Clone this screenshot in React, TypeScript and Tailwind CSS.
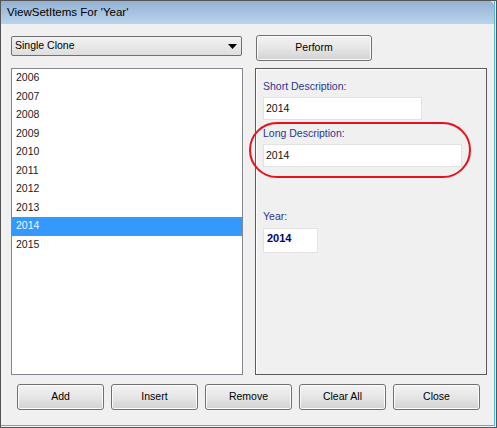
import React from "react";

const years = ["2006", "2007", "2008", "2009", "2010", "2011", "2012", "2013", "2014", "2015"];
const selected = "2014";

const font = { fontFamily: '"Liberation Sans", Arial, sans-serif' };

function WinButton({ label, className = "" }: { label: string; className?: string }) {
  return (
    <button
      className={`h-[26px] rounded-[3px] border border-[#707070] bg-gradient-to-b from-[#f3f3f3] via-[#e6e6e6] to-[#d2d2d2] text-[10.5px] text-black shadow-[inset_0_0_0_1px_#fcfcfc] ${className}`}
    >
      {label}
    </button>
  );
}

export default function App() {
  return (
    <div style={font} className="w-[497px] h-[428px] border border-[#555555] bg-[#e8e8e8]">
      <div className="h-full w-full border-r border-b border-[#f2f2f2]">
        <div className="h-full w-full flex flex-col border-r border-b border-[#4fb2e2]">
          {/* title bar */}
          <div className="h-[23px] flex items-center pl-[6px] bg-gradient-to-b from-[#93b1d2] to-[#bad4ed] text-[11.5px] text-black rounded-tr-[5px]">
            ViewSetItems For 'Year'
          </div>

          {/* body */}
          <div className="flex-1 bg-[#f0f0f0] flex flex-col pl-[10px] pr-[6px] pt-[11px]">
            <div className="flex gap-[12px]">
              {/* left column */}
              <div className="w-[232px] flex flex-col">
                <div className="h-[26px] flex items-start">
                  <div className="mt-[1px] h-[20px] w-[231px] rounded-[2px] border border-[#707070] bg-gradient-to-b from-[#f2f2f2] to-[#dedede] flex items-center justify-between pl-[3px] pr-[4px]">
                    <span className="text-[10.5px] text-black">Single Clone</span>
                    <svg width="9" height="5" viewBox="0 0 9 5">
                      <path d="M0 0 H9 L4.5 5 Z" fill="#000" />
                    </svg>
                  </div>
                </div>
                <div className="mt-[7px] h-[307px] border border-[#828790] bg-white">
                  {years.map((y) =>
                    y === selected ? (
                      <div
                        key={y}
                        className="h-[18.5px] flex items-center pl-[4px] bg-[#3399ff] border-y border-[#6e8cae] text-[10.5px] text-[#f4f8ff]"
                      >
                        {y}
                      </div>
                    ) : (
                      <div key={y} className="h-[18.5px] flex items-center pl-[4px] text-[10.5px] text-[#1a1a1a]">
                        {y}
                      </div>
                    )
                  )}
                </div>
              </div>

              {/* right column */}
              <div className="w-[232px] flex flex-col">
                <div className="h-[26px] flex">
                  <WinButton label="Perform" className="ml-[1px] w-[116px]" />
                </div>
                <div className="relative mt-[7px] h-[307px] border border-[#5a5a5a] shadow-[inset_1px_1px_0_#ffffff] flex flex-col pl-[7px] pt-[11px]">
                  <div className="h-[13px] leading-[13px] text-[10.5px] text-[#2c3590]">Short Description:</div>
                  <div className="mt-[4px] h-[23px] w-[159px] bg-white border border-[#e2e2e2] pl-[2px] pt-[4px] text-[10.5px] leading-[13px] text-[#111111]">
                    2014
                  </div>
                  <div className="mt-[7px] h-[13px] leading-[13px] text-[10.5px] text-[#2c3590]">Long Description:</div>
                  <div className="mt-[4px] h-[23px] w-[199px] bg-white border border-[#e2e2e2] pl-[2px] pt-[4px] text-[10.5px] leading-[13px] text-[#111111]">
                    2014
                  </div>
                  <div className="mt-[43px] h-[13px] leading-[13px] text-[10.5px] text-[#2c3590]">Year:</div>
                  <div className="mt-[5px] h-[25px] w-[55px] bg-white border border-[#e2e2e2] pl-[3px] pt-[3px] text-[11px] leading-[13px] font-bold text-[#000080]">
                    2014
                  </div>

                  {/* red highlight */}
                  <div className="absolute left-[-7px] top-[53px] w-[222px] h-[56px] rounded-[28px] border-2 border-[#e8101a] pointer-events-none" />
                </div>
              </div>
            </div>

            {/* buttons */}
            <div className="mt-[9px] flex gap-[7px] pl-[6px]">
              <WinButton label="Add" className="w-[87px]" />
              <WinButton label="Insert" className="w-[87px]" />
              <WinButton label="Remove" className="w-[87px]" />
              <WinButton label="Clear All" className="w-[87px]" />
              <WinButton label="Close" className="w-[87px]" />
            </div>
          </div>
        </div>
      </div>
    </div>
  );
}
